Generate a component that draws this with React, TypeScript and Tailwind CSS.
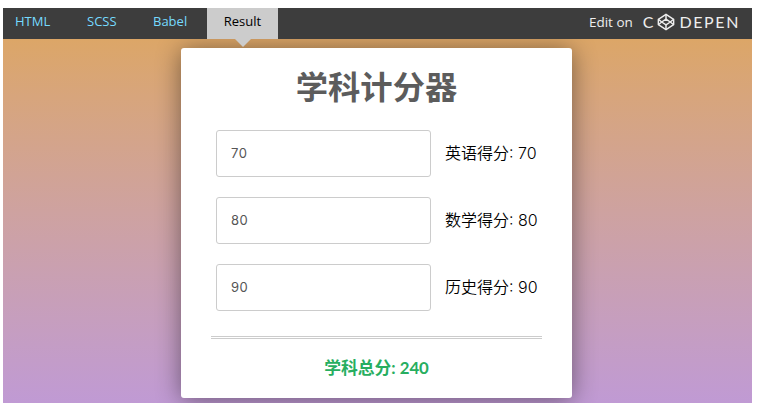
const tabs = [
  { name: "HTML", width: "w-[72px]" },
  { name: "SCSS", width: "w-[66px]" },
  { name: "Babel", width: "w-[66px]" },
];

const scores = [
  { label: "英语得分", value: 70 },
  { label: "数学得分", value: 80 },
  { label: "历史得分", value: 90 },
];

const total = scores.reduce((sum, s) => sum + s.value, 0);

function CodepenCube() {
  return (
    <svg width="18" height="18" viewBox="0 0 20 20" fill="none" stroke="#eeeeee" strokeWidth="1.6" strokeLinejoin="round">
      <path d="M10 1.5 18.5 7v6L10 18.5 1.5 13V7z" />
      <path d="M10 6.8 14.8 10 10 13.2 5.2 10z" />
      <path d="M10 1.5v5.3M10 13.2v5.3M1.5 7l3.7 3-3.7 3M18.5 7l-3.7 3 3.7 3" />
    </svg>
  );
}

export default function App() {
  return (
    <div className="w-[764px] h-[412px] bg-white pt-2 pl-[3px] pr-3 pb-[9px] overflow-hidden">
      <div className="h-full flex flex-col">
        {/* Embed bar */}
        <div className="relative z-10 h-[31px] shrink-0 bg-[#3d3d3d] flex items-stretch justify-between font-['Open_Sans',sans-serif] text-[13px]">
          <div className="flex items-stretch">
            {tabs.map((tab) => (
              <div key={tab.name} className={`${tab.width} pl-3 pb-[4px] flex items-center font-medium text-[#76daff]`}>
                {tab.name}
              </div>
            ))}
            <div className="relative w-[71px] bg-[#cccccc] text-black font-medium pb-[4px] flex items-center justify-center">
              Result
              <div className="absolute top-full left-1/2 -translate-x-1/2 w-0 h-0 border-x-[8px] border-x-transparent border-t-[8px] border-t-[#cccccc]" />
            </div>
          </div>
          <div className="flex items-center pb-[3px] pr-[12px] text-[#eeeeee]">
            <span className="mr-[10px] text-[13.5px] font-medium">Edit on</span>
            <div className="flex items-center gap-[3px] font-['Lato',sans-serif] text-[16px] leading-none">
              <span>C</span>
              <CodepenCube />
              <span className="tracking-[1.6px] ml-[2px]">DEPEN</span>
            </div>
          </div>
        </div>

        {/* Result pane */}
        <div className="flex-1 flex justify-center items-start overflow-hidden bg-gradient-to-b from-[#dca667] to-[#c09ad4] pt-[9px] pr-[2px]">
          <div className="w-[391px] h-[350px] bg-white rounded-[3px] shadow-[0_2px_24px_rgba(0,0,0,0.45)] px-[30px] flex flex-col">
            <h1 className="mt-[16px] h-[45px] text-center text-[32.3px] leading-[45px] font-bold text-[#5c5c5c] font-['Lato','Noto_Sans_CJK_SC',sans-serif]">
              学科计分器
            </h1>
            <div className="mt-[21px] flex flex-col gap-5 pl-[5px]">
              {scores.map((s) => (
                <div key={s.label} className="flex items-center">
                  <input
                    readOnly
                    value={s.value}
                    className="w-[215px] h-[47px] border border-[#cccccc] rounded-[3px] pl-[14px] pb-[1px] text-[13px] tracking-[0.5px] text-[#555555] font-['Inter',sans-serif] outline-none"
                  />
                  <span className="ml-[14px] pb-[2px] text-[16px] text-black font-[350] font-['Inter','Noto_Sans_CJK_SC',sans-serif]">
                    {s.label}: {s.value}
                  </span>
                </div>
              ))}
            </div>
            <div className="mt-[25px] h-[3px] border-y border-[#cccccc]" />
            <div className="mt-[16px] text-center text-[16.8px] font-bold text-[#27ae60] font-['Lato','Noto_Sans_CJK_SC',sans-serif]">
              学科总分: {total}
            </div>
          </div>
        </div>
      </div>
    </div>
  );
}
